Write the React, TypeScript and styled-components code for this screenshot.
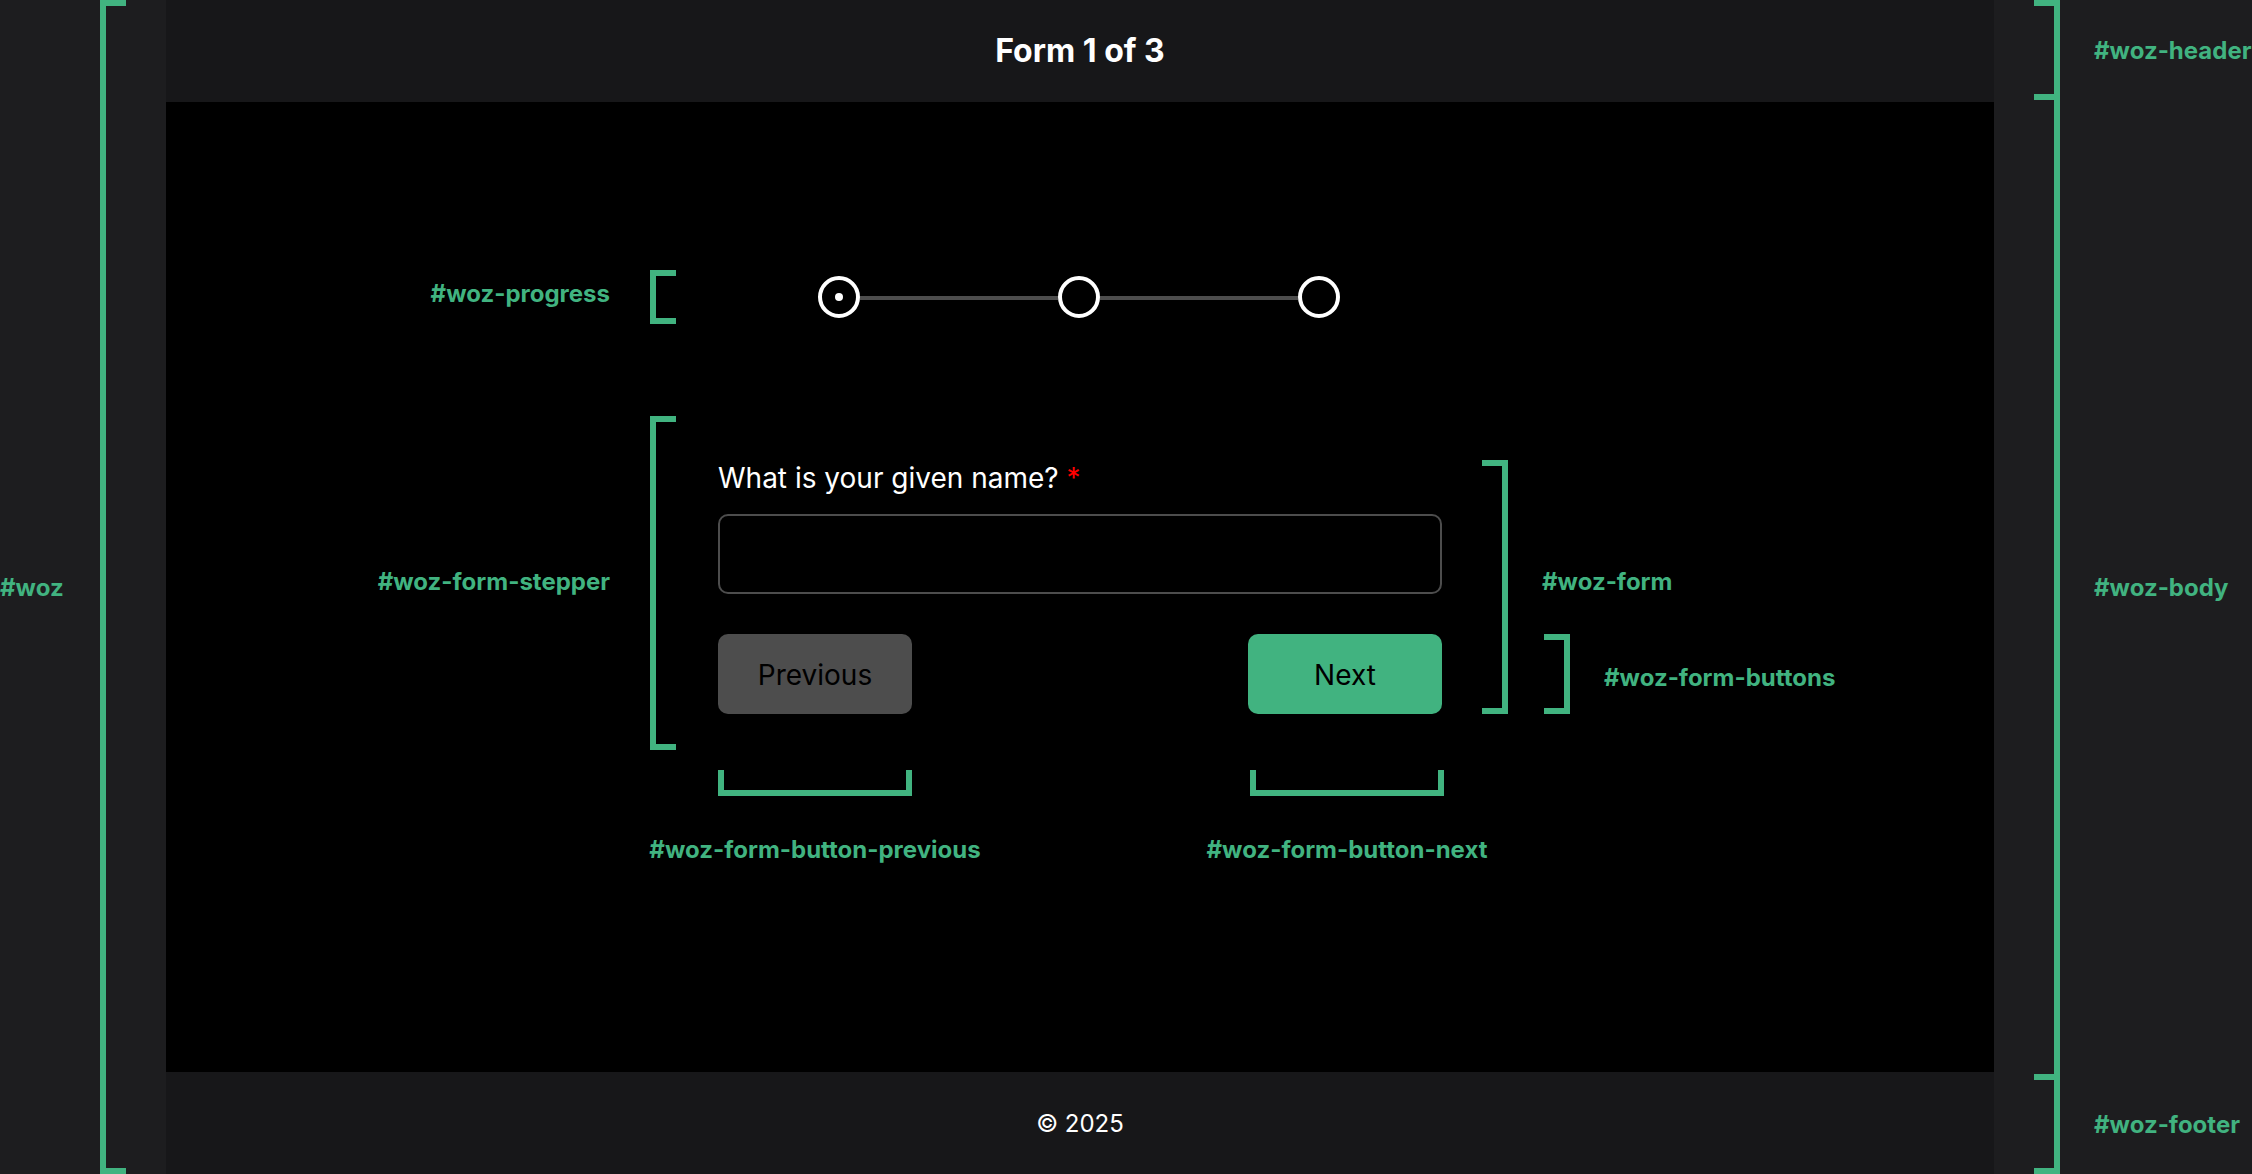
import React, { useState } from "react";
import styled, { createGlobalStyle, css } from "styled-components";

const green = "#41b380";
const grey = "#4d4d4d";

const GlobalStyle = createGlobalStyle`
  *, *::before, *::after { box-sizing: border-box; }
  body {
    margin: 0;
    background: #1d1d1f;
    color: #fff;
    font-family: Inter, "Liberation Sans", sans-serif;
  }
`;

const Page = styled.div`
  display: grid;
  grid-template-columns: 166px minmax(0, 1fr) 258px;
  min-height: 100vh;
`;

const Tag = styled.span`
  padding-top: 2px;
  color: ${green};
  font-size: 24px;
  font-weight: 700;
  line-height: 30px;
  white-space: nowrap;
`;

type Side = "left" | "right" | "bottom";

const Bracket = styled.span<{ $side: Side; $open?: boolean }>`
  display: block;
  flex: none;
  align-self: stretch;
  border: 0 solid ${green};
  ${({ $side, $open }) =>
    $side === "bottom"
      ? css`
          height: 26px;
          border-width: 0 6px 6px;
        `
      : css`
          width: 26px;
          border-top-width: ${$open ? 0 : 6}px;
          border-bottom-width: ${$open ? 0 : 6}px;
          border-${$side}-width: 6px;
        `}
`;

const LeftRail = styled.aside`
  display: flex;
  align-items: center;
  justify-content: space-between;
  padding-right: 40px;
`;

const RightRail = styled.aside`
  display: flex;
  flex-direction: column;
  padding-left: 40px;
`;

const RailSection = styled.div<{ $grow?: boolean }>`
  display: flex;
  align-items: center;
  gap: 34px;
  height: ${({ $grow }) => ($grow ? "auto" : "100px")};
  flex: ${({ $grow }) => ($grow ? "1" : "none")};
`;

const Shell = styled.div`
  display: flex;
  flex-direction: column;
  background: #171719;
`;

const Bar = styled.div`
  display: flex;
  align-items: center;
  justify-content: center;
  height: 102px;
`;

const Title = styled.h1`
  margin: 0;
  font-size: 32px;
  font-weight: 700;
  line-height: 40px;
`;

const Copyright = styled.p`
  margin: 0;
  padding-top: 2px;
  font-size: 24px;
  line-height: 30px;
`;

const Body = styled.main`
  flex: 1;
  display: grid;
  grid-template-columns: minmax(0, 1fr) 724px minmax(0, 1fr);
  align-content: start;
  padding: 168px 0;
  background: #000;
`;

const LeftNote = styled.div<{ $raise: number }>`
  grid-column: 1;
  display: flex;
  align-items: center;
  justify-content: flex-end;
  gap: 40px;
  padding-right: 42px;

  ${Tag} {
    padding-bottom: ${({ $raise }) => $raise}px;
  }
`;

const Progress = styled.ol`
  grid-column: 2;
  display: flex;
  align-items: center;
  justify-content: center;
  height: 54px;
  margin: 0 0 92px;
  padding: 0 2px 0 0;
  list-style: none;
`;

const Step = styled.li`
  display: flex;
  align-items: center;

  & + &::before {
    content: "";
    width: 198px;
    height: 4px;
    margin-top: 2px;
    background: ${grey};
  }
`;

const Marker = styled.span<{ $current: boolean }>`
  display: flex;
  align-items: center;
  justify-content: center;
  width: 42px;
  height: 42px;
  border: 4px solid #fff;
  border-radius: 50%;

  &::after {
    content: "";
    width: 8px;
    height: 8px;
    border-radius: 50%;
    background: ${({ $current }) => ($current ? "#fff" : "transparent")};
  }
`;

const ProgressNote = styled(LeftNote)`
  height: 54px;
`;

const Form = styled.form`
  grid-column: 2;
  display: flex;
  flex-direction: column;
  padding: 44px 0 36px;
`;

const Question = styled.label`
  margin-bottom: 18px;
  font-size: 28px;
  line-height: 36px;
`;

const Required = styled.span`
  color: #f00;
`;

const Field = styled.input`
  width: 100%;
  height: 80px;
  margin: 0 0 40px;
  padding: 0 24px;
  border: 2px solid ${grey};
  border-radius: 10px;
  background: #000;
  color: #fff;
  font: inherit;
  font-size: 28px;
`;

const Buttons = styled.div`
  display: flex;
  justify-content: space-between;
`;

const Button = styled.button<{ $primary?: boolean }>`
  width: 194px;
  height: 80px;
  padding: 2px 0 0;
  border: 0;
  border-radius: 10px;
  background: ${({ $primary }) => ($primary ? green : grey)};
  color: #000;
  font: inherit;
  font-size: 28px;
  line-height: 36px;
`;

const RightNotes = styled.div`
  grid-column: 3;
  display: flex;
  gap: 34px;
  padding: 44px 0 36px 40px;
`;

const RightStack = styled.div`
  display: flex;
  flex-direction: column;
`;

const FormNote = styled.div`
  flex: 1;
  display: flex;
  align-items: flex-end;
  padding-bottom: 37px;
`;

const ButtonsNote = styled.div`
  display: flex;
  align-items: center;
  gap: 34px;
  height: 80px;
  padding-left: 2px;

  ${Tag} {
    padding-top: 8px;
  }
`;

const BottomNotes = styled.div`
  grid-column: 2;
  display: flex;
  justify-content: space-between;
  margin: 20px -2px 0 0;
`;

const BottomNote = styled.div`
  display: flex;
  flex-direction: column;
  align-items: center;
  gap: 37px;
  width: 194px;
`;

const steps = ["Form 1", "Form 2", "Form 3"];

export default function App() {
  const [name, setName] = useState("");

  return (
    <>
      <GlobalStyle />
      <Page>
        <LeftRail>
          <Tag>#woz</Tag>
          <Bracket $side="left" />
        </LeftRail>

        <Shell>
          <Bar as="header">
            <Title>Form 1 of 3</Title>
          </Bar>

          <Body>
            <ProgressNote $raise={8}>
              <Tag>#woz-progress</Tag>
              <Bracket $side="left" />
            </ProgressNote>
            <Progress>
              {steps.map((step, index) => (
                <Step key={step} aria-current={index === 0 ? "step" : undefined}>
                  <Marker $current={index === 0} />
                </Step>
              ))}
            </Progress>

            <LeftNote $raise={4}>
              <Tag>#woz-form-stepper</Tag>
              <Bracket $side="left" />
            </LeftNote>
            <Form onSubmit={(event) => event.preventDefault()}>
              <Question htmlFor="given-name">
                What is your given name? <Required>*</Required>
              </Question>
              <Field
                id="given-name"
                type="text"
                required
                value={name}
                onChange={(event) => setName(event.target.value)}
              />
              <Buttons>
                <Button type="button" disabled>
                  Previous
                </Button>
                <Button type="submit" $primary>
                  Next
                </Button>
              </Buttons>
            </Form>
            <RightNotes>
              <Bracket $side="right" />
              <RightStack>
                <FormNote>
                  <Tag>#woz-form</Tag>
                </FormNote>
                <ButtonsNote>
                  <Bracket $side="right" />
                  <Tag>#woz-form-buttons</Tag>
                </ButtonsNote>
              </RightStack>
            </RightNotes>

            <BottomNotes>
              <BottomNote>
                <Bracket $side="bottom" />
                <Tag>#woz-form-button-previous</Tag>
              </BottomNote>
              <BottomNote>
                <Bracket $side="bottom" />
                <Tag>#woz-form-button-next</Tag>
              </BottomNote>
            </BottomNotes>
          </Body>

          <Bar as="footer">
            <Copyright>© 2025</Copyright>
          </Bar>
        </Shell>

        <RightRail>
          <RailSection>
            <Bracket $side="right" />
            <Tag>#woz-header</Tag>
          </RailSection>
          <RailSection $grow>
            <Bracket $side="right" $open />
            <Tag>#woz-body</Tag>
          </RailSection>
          <RailSection>
            <Bracket $side="right" />
            <Tag>#woz-footer</Tag>
          </RailSection>
        </RightRail>
      </Page>
    </>
  );
}
